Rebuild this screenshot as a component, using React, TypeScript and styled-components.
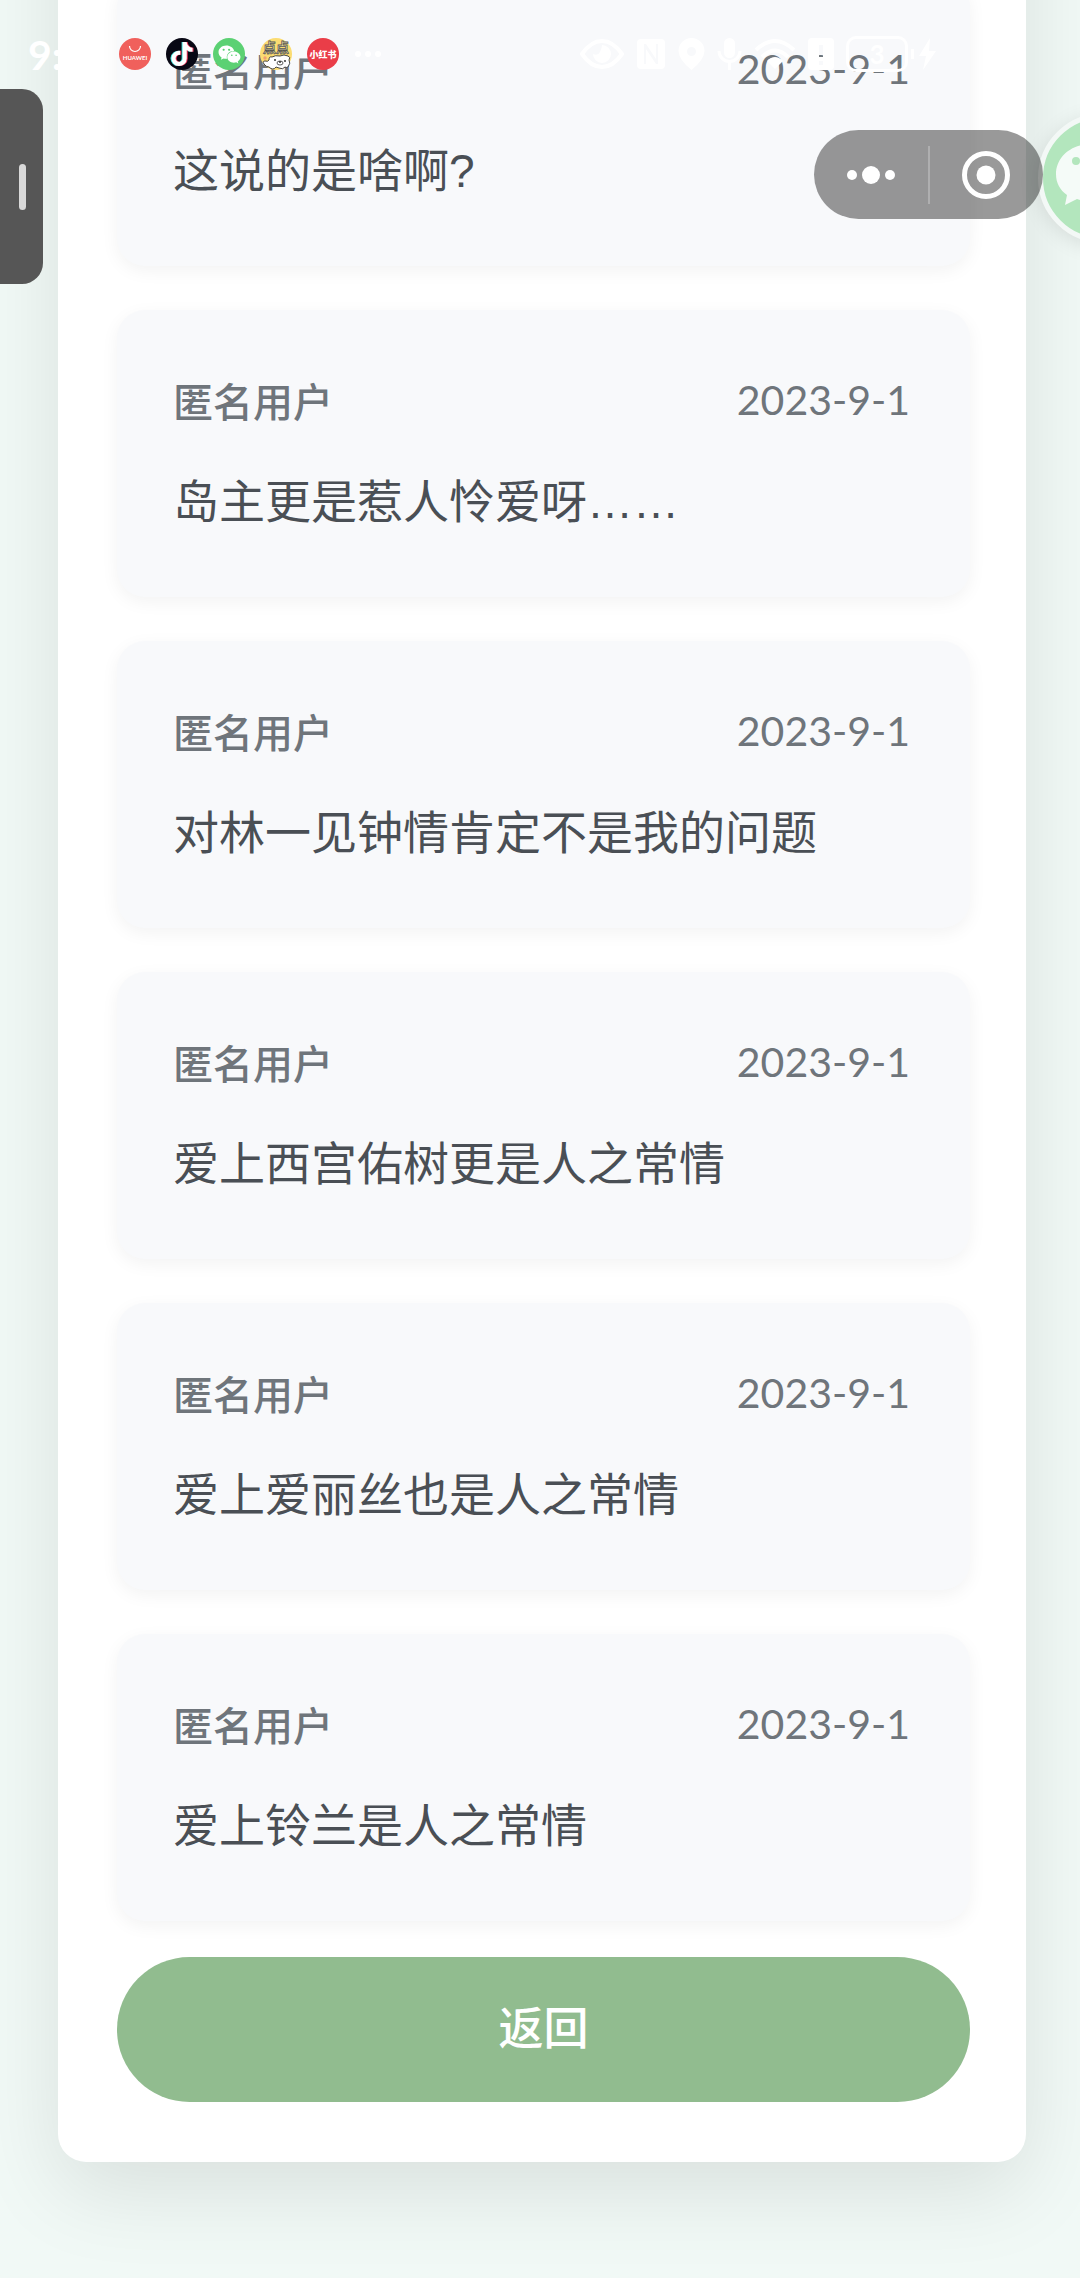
import React from "react";
import styled, { createGlobalStyle } from "styled-components";
import { FaWeixin, FaTiktok } from "react-icons/fa";

const GlobalStyle = createGlobalStyle`
  *, *::before, *::after { box-sizing: border-box; }
  body {
    margin: 0;
    font-family: "Lato", "Noto Sans CJK SC", sans-serif;
    background: #f1f9f6;
  }
  button { font: inherit; border: 0; padding: 0; cursor: pointer; }
`;

const Page = styled.div`
  position: relative;
  display: flow-root;
  min-height: 100vh;
  overflow: hidden;
  padding: 0 54px 116px 58px;
`;

/* The list is shown scrolled: the head of the panel lies above the window. */
const Panel = styled.main`
  margin-top: -200px;
  padding: 179px 56px 60px 59px;
  border-radius: 28px;
  background: #fff;
  box-shadow: 0 28px 86px rgba(0, 0, 0, 0.1);
`;

const CommentList = styled.ul`
  display: flex;
  flex-direction: column;
  gap: 44px;
  margin: 0;
  padding: 0;
  list-style: none;
`;

const Card = styled.li`
  padding: 59px 60px 58px 56px;
  border-radius: 28px;
  background: #f8f9fb;
  box-shadow: 0 5px 18px rgba(0, 0, 0, 0.05);
`;

const CardHead = styled.div`
  display: flex;
  justify-content: space-between;
  margin-bottom: 34px;
  line-height: 62px;
  color: #6f757b;
`;

const Author = styled.span`
  font-family: "Noto Sans CJK SC", sans-serif;
  font-size: 40px;
  font-weight: 500;
`;

const PostedOn = styled.time`
  font-size: 41px;
`;

const Message = styled.p`
  margin: 0;
  font-family: "Liberation Sans", "Noto Sans CJK SC", sans-serif;
  font-size: 46px;
  line-height: 74px;
  color: #4a4f55;
`;

const BackButton = styled.button`
  display: block;
  width: 100%;
  height: 145px;
  margin-top: 36px;
  border-radius: 73px;
  background: #91bc8f;
  color: #fff;
  && {
    padding-bottom: 8px;
    font-family: "Noto Sans CJK SC", sans-serif;
    font-size: 45px;
    font-weight: 500;
  }
`;

const StatusBar = styled.header`
  position: absolute;
  top: 0;
  left: 0;
  right: 0;
  z-index: 3;
  display: flex;
  justify-content: space-between;
  align-items: center;
  height: 108px;
  padding: 0 144px 0 28px;
  color: #fff;
  pointer-events: none;
`;

const Group = styled.div<{ $gap: number }>`
  display: flex;
  align-items: center;
  gap: ${(p) => p.$gap}px;
`;

const Clock = styled.time`
  width: 76px;
  font-size: 41px;
  font-weight: 700;
`;

const AppBadge = styled.span<{ $bg: string }>`
  position: relative;
  display: flex;
  align-items: center;
  justify-content: center;
  width: 32px;
  height: 32px;
  border-radius: 50%;
  background: ${(p) => p.$bg};
`;

const NoteLayer = styled(FaTiktok)<{ $x: number; $color: string }>`
  position: absolute;
  top: 4px;
  left: ${(p) => p.$x}px;
  color: ${(p) => p.$color};
`;

const Battery = styled.span`
  display: flex;
  align-items: center;
  justify-content: center;
  width: 62px;
  height: 36px;
  border: 3px solid #fff;
  border-radius: 10px;
  font-size: 26px;
  font-weight: 700;
`;

const Handle = styled.button`
  position: absolute;
  top: 89px;
  left: 0;
  display: flex;
  align-items: center;
  justify-content: flex-end;
  width: 43px;
  height: 195px;
  && { padding-right: 17px; }
  border-radius: 0 21px 21px 0;
  background: #565656;
`;

const Grip = styled.span`
  width: 7px;
  height: 46px;
  border-radius: 4px;
  background: #d9d9d9;
`;

const Capsule = styled.div`
  position: absolute;
  top: 130px;
  right: 37px;
  z-index: 2;
  display: flex;
  align-items: center;
  width: 229px;
  height: 89px;
  border-radius: 45px;
  background: rgba(0, 0, 0, 0.4);
`;

const CapsuleButton = styled.button`
  display: flex;
  flex: 1;
  align-items: center;
  justify-content: center;
  height: 100%;
  background: none;
`;

const CapsuleLine = styled.span`
  width: 2px;
  height: 58px;
  background: rgba(255, 255, 255, 0.25);
`;

const ChatBubble = styled.button`
  position: absolute;
  top: 113px;
  right: -88px;
  z-index: 1;
  display: flex;
  align-items: center;
  justify-content: center;
  width: 130px;
  height: 130px;
  && { border: 5px solid #f3f8f6; }
  border-radius: 50%;
  background: #b3e6bd;
  color: #f5fbf8;
  box-shadow: 0 4px 20px rgba(0, 0, 0, 0.1);
`;

const comments = [
  "这说的是啥啊?",
  "岛主更是惹人怜爱呀……",
  "对林一见钟情肯定不是我的问题",
  "爱上西宫佑树更是人之常情",
  "爱上爱丽丝也是人之常情",
  "爱上铃兰是人之常情",
];

const HuaweiIcon = () => (
  <svg width="32" height="32" viewBox="0 0 32 32">
    <path d="M10.500 8a5.500 5.500 0 0 0 11 0" fill="none" stroke="#fff" strokeWidth="1.200" />
    <text x="16" y="22" fontSize="6" fontWeight="700" textAnchor="middle" fill="#fff">HUAWEI</text>
  </svg>
);

const BearIcon = () => (
  <svg width="32" height="32" viewBox="0 0 32 32" overflow="visible">
    <g fontFamily="Noto Sans CJK SC" fontSize="13" fontWeight="700" fill="#f4e9b0" stroke="#555" strokeWidth="0.800">
      <text x="3" y="14">点</text>
      <text x="16" y="14">点</text>
    </g>
    <path
      d="M9 29Q6 29 4 26Q2 23 5 23Q8 24 9 22Q9 18 12 19Q15 17 20 18Q24 16 28 18Q31 19 29 22Q31 25 28 29Q26 30 25 29Q23 32 19 30L16 29Q13 33 9 29Z"
      fill="#fff"
      stroke="#333"
      strokeWidth="0.900"
    />
    <circle cx="15" cy="22" r="0.900" fill="#222" />
    <circle cx="25" cy="23" r="0.900" fill="#222" />
    <ellipse cx="20" cy="25" rx="3" ry="2" fill="#fff" stroke="#333" strokeWidth="0.800" />
    <circle cx="20" cy="24" r="0.900" fill="#222" />
    <circle cx="5" cy="20" r="1.700" fill="#f0a070" />
  </svg>
);

const RedBookIcon = () => (
  <svg width="32" height="32" viewBox="0 0 32 32">
    <text x="16" y="20" fontFamily="Noto Sans CJK SC" fontSize="9" fontWeight="900" textAnchor="middle" fill="#fff">
      小红书
    </text>
  </svg>
);

const MoreIcon = () => (
  <svg width="28" height="8" viewBox="0 0 28 8" fill="#fff">
    <circle cx="4" cy="4" r="3" />
    <circle cx="14" cy="4" r="3" />
    <circle cx="24" cy="4" r="3" />
  </svg>
);

const EyeIcon = () => (
  <svg width="44" height="32" viewBox="0 0 44 32">
    <path d="M2 16Q11 3 22 3T42 16Q33 29 22 29T2 16Z" fill="none" stroke="#fff" strokeWidth="4" />
    <path d="M22 7a9 9 0 1 1-9 9q5 2 7-2t2-7Z" fill="#fff" />
  </svg>
);

const NfcIcon = () => (
  <svg width="30" height="32" viewBox="0 0 30 32">
    <path
      fillRule="evenodd"
      fill="#fff"
      d="M5 1H25Q29 1 29 5V27Q29 31 25 31H5Q1 31 1 27V5Q1 1 5 1ZM8 6V26H10V11L20 26H22V6H20V21L10 6Z"
    />
  </svg>
);

const PinIcon = () => (
  <svg width="27" height="32" viewBox="0 0 27 32">
    <path
      fillRule="evenodd"
      fill="#fff"
      d="M13.500 0A13 13 0 0 1 26.500 13Q26 22 13.500 32Q1 22 0.500 13A13 13 0 0 1 13.500 0ZM13.500 9a4.500 4.500 0 1 0 0 9a4.500 4.500 0 1 0 0-9Z"
    />
  </svg>
);

const MicIcon = () => (
  <svg width="25" height="32" viewBox="0 0 25 32">
    <rect x="7" y="0" width="11" height="20" rx="5.500" fill="#fff" />
    <path d="M2 13a10.500 10.500 0 0 0 21 0M12.500 24v8" fill="none" stroke="#fff" strokeWidth="3" />
  </svg>
);

const WifiIcon = () => (
  <svg width="42" height="32" viewBox="0 0 42 32">
    <g fill="none" stroke="#fff" strokeWidth="4">
      <path d="M2 12Q21-6 40 12" />
      <path d="M8 19Q21 6 34 19" />
    </g>
    <path d="M13 23Q21 15 29 23L21 31Z" fill="#fff" />
  </svg>
);

const SimIcon = () => (
  <svg width="26" height="32" viewBox="0 0 26 32">
    <path
      fillRule="evenodd"
      fill="#fff"
      d="M4 0H22Q26 0 26 4V28Q26 32 22 32H4Q0 32 0 28V4Q0 0 4 0ZM11 7V19H15V7ZM11 23V27H15V23Z"
    />
  </svg>
);

const BoltIcon = () => (
  <svg width="25" height="32" viewBox="0 0 25 32" fill="#fff">
    <path d="M0 11h3v10H0Z" />
    <path d="M19 0L8 18h7l-3 14L25 13h-7Z" />
  </svg>
);

const DotsIcon = () => (
  <svg width="50" height="20" viewBox="0 0 50 20" fill="#fff">
    <circle cx="6" cy="10" r="5" />
    <circle cx="25" cy="10" r="9" />
    <circle cx="44" cy="10" r="5" />
  </svg>
);

const TargetIcon = () => (
  <svg width="50" height="50" viewBox="0 0 50 50">
    <circle cx="25" cy="25" r="21.500" fill="none" stroke="#fff" strokeWidth="5" />
    <circle cx="25" cy="25" r="9.500" fill="#fff" />
  </svg>
);

/* The bubble hangs over the window's right edge, so only its left part shows. */
const LargeChatIcon = () => (
  <svg width="96" height="90" viewBox="0 0 96 90">
    <path
      fillRule="evenodd"
      fill="currentColor"
      d="M36 11C16 11 1 24 1 41C1 50 5 57 12 62L10 72L22 66C27 68 32 69 38 69C35 50 50 36 71 36C68 21 54 11 36 11ZM21 24a4 4 0 1 1 0 8a4 4 0 1 1 0-8ZM48 24a4 4 0 1 1 0 8a4 4 0 1 1 0-8Z"
    />
    <path fill="currentColor" d="M68 40C85 40 95 50 95 62C95 69 91 75 86 78L88 86L79 82C57 87 42 76 42 62C42 50 53 40 68 40Z" />
  </svg>
);

export default function App() {
  return (
    <>
      <GlobalStyle />
      <Page>
        <StatusBar>
          <Group $gap={15}>
            <Clock>9:3</Clock>
            <AppBadge $bg="#f0605c"><HuaweiIcon /></AppBadge>
            <AppBadge $bg="#080814">
              <NoteLayer size={24} $x={3} $color="#4de8e4" />
              <NoteLayer size={24} $x={5} $color="#f0385c" />
              <NoteLayer size={24} $x={4} $color="#fff" />
            </AppBadge>
            <AppBadge $bg="#5bd173"><FaWeixin size={23} color="#fff" /></AppBadge>
            <AppBadge $bg="#fbdc72"><BearIcon /></AppBadge>
            <AppBadge $bg="#ea3d48"><RedBookIcon /></AppBadge>
            <MoreIcon />
          </Group>
          <Group $gap={12}>
            <EyeIcon />
            <NfcIcon />
            <PinIcon />
            <MicIcon />
            <WifiIcon />
            <SimIcon />
            <Group $gap={3}>
              <Battery>3</Battery>
              <BoltIcon />
            </Group>
          </Group>
        </StatusBar>

        <Handle aria-label="侧边栏"><Grip /></Handle>
        <ChatBubble aria-label="微信"><LargeChatIcon /></ChatBubble>
        <Capsule>
          <CapsuleButton aria-label="更多"><DotsIcon /></CapsuleButton>
          <CapsuleLine />
          <CapsuleButton aria-label="关闭"><TargetIcon /></CapsuleButton>
        </Capsule>

        <Panel>
          <CommentList>
            {comments.map((text) => (
              <Card key={text}>
                <CardHead>
                  <Author>匿名用户</Author>
                  <PostedOn dateTime="2023-09-01">2023-9-1</PostedOn>
                </CardHead>
                <Message>{text}</Message>
              </Card>
            ))}
          </CommentList>
          <BackButton>返回</BackButton>
        </Panel>
      </Page>
    </>
  );
}
